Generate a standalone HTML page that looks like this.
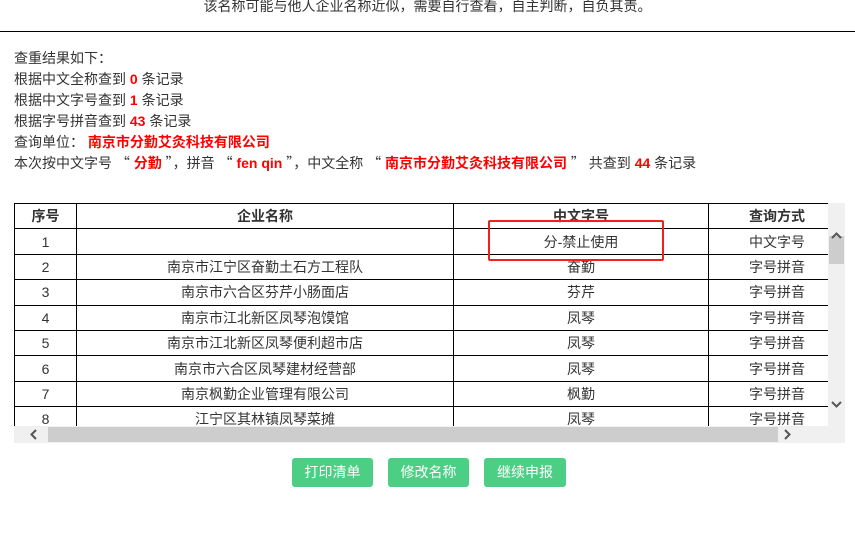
<!DOCTYPE html>
<html><head><meta charset="utf-8"><style>
body{margin:0;width:855px;height:550px;background:#fff;font-family:"Liberation Sans","Noto Sans CJK SC",sans-serif;font-size:14px;color:#333;position:relative;overflow:hidden}
.top{position:absolute;left:0;width:855px;top:-3px;text-align:center;font-size:14px;line-height:18px}
.hr{position:absolute;left:0;top:31px;width:855px;height:1px;background:#000}
.info{position:absolute;left:14px;top:48px;line-height:21px;white-space:pre}
.r{color:#f00;font-weight:bold;font-size:14px}
.q{font-family:"Noto Sans CJK SC",sans-serif}
.wrap{position:absolute;left:14px;top:203px;width:814px;height:223px;overflow:hidden}
table{border-collapse:collapse;width:831px;table-layout:fixed}
td,th{border:1px solid #000;height:24.4px;padding:0;text-align:center;font-size:14px;white-space:nowrap;overflow:hidden}
th{font-weight:bold}
.vs{position:absolute;left:828px;top:203px;width:17px;height:223px;background:#f0f0f0}
.hs{position:absolute;left:14px;top:426px;width:831px;height:17px;background:#f0f0f0}
.btn{position:absolute;top:458px;height:29px;width:81px;background:#4ccf84;border-radius:3px;color:#fff;text-align:center;line-height:29px;font-size:14px}
.box{position:absolute;left:488px;top:220px;width:172px;height:37px;border:2px solid #f0201a;border-radius:2px}
</style></head><body>
<div class="top">该名称可能与他人企业名称近似，需要自行查看，自主判断，自负其责。</div>
<div class="hr"></div>
<div class="info">查重结果如下：
根据中文全称查到 <span class="r">0</span> 条记录
根据中文字号查到 <span class="r">1</span> 条记录
根据字号拼音查到 <span class="r">43</span> 条记录
查询单位： <span class="r">南京市分勤艾灸科技有限公司</span>
本次按中文字号 <span class="q">“</span> <span class="r">分勤</span> <span class="q">”</span>，拼音 <span class="q">“</span> <span class="r">fen qin</span> <span class="q">”</span>，中文全称 <span class="q">“</span> <span class="r">南京市分勤艾灸科技有限公司</span> <span class="q">”</span> 共查到 <span class="r">44</span> 条记录</div>
<div class="wrap"><table>
<colgroup><col style="width:62px"><col style="width:377px"><col style="width:255px"><col style="width:137px"></colgroup>
<tr><th>序号</th><th>企业名称</th><th>中文字号</th><th>查询方式</th></tr>
<tr><td>1</td><td></td><td>分-禁止使用</td><td>中文字号</td></tr>
<tr><td>2</td><td>南京市江宁区奋勤土石方工程队</td><td>奋勤</td><td>字号拼音</td></tr>
<tr><td>3</td><td>南京市六合区芬芹小肠面店</td><td>芬芹</td><td>字号拼音</td></tr>
<tr><td>4</td><td>南京市江北新区凤琴泡馍馆</td><td>凤琴</td><td>字号拼音</td></tr>
<tr><td>5</td><td>南京市江北新区凤琴便利超市店</td><td>凤琴</td><td>字号拼音</td></tr>
<tr><td>6</td><td>南京市六合区凤琴建材经营部</td><td>凤琴</td><td>字号拼音</td></tr>
<tr><td>7</td><td>南京枫勤企业管理有限公司</td><td>枫勤</td><td>字号拼音</td></tr>
<tr><td>8</td><td>江宁区其林镇凤琴菜摊</td><td>凤琴</td><td>字号拼音</td></tr>
</table></div>
<div class="vs"><div style="position:absolute;left:1px;top:33px;width:15px;height:28px;background:#cdcdcd"></div>
<svg style="position:absolute;left:3px;top:29px" width="11" height="8"><path d="M1 6L5.5 1.5L10 6" stroke="#555" stroke-width="2" fill="none"/></svg>
<svg style="position:absolute;left:3px;top:197px" width="11" height="8"><path d="M1 2L5.5 6.5L10 2" stroke="#555" stroke-width="2" fill="none"/></svg></div>
<div class="hs"><div style="position:absolute;left:34px;top:1px;width:730px;height:15px;background:#cdcdcd"></div>
<svg style="position:absolute;left:16px;top:3px" width="8" height="11"><path d="M6 1L1.5 5.5L6 10" stroke="#555" stroke-width="2" fill="none"/></svg>
<svg style="position:absolute;left:769px;top:3px" width="8" height="11"><path d="M2 1L6.5 5.5L2 10" stroke="#555" stroke-width="2" fill="none"/></svg></div>
<div class="box"></div>
<div class="btn" style="left:292px">打印清单</div>
<div class="btn" style="left:388px">修改名称</div>
<div class="btn" style="left:484px;width:82px">继续申报</div>
</body></html>
